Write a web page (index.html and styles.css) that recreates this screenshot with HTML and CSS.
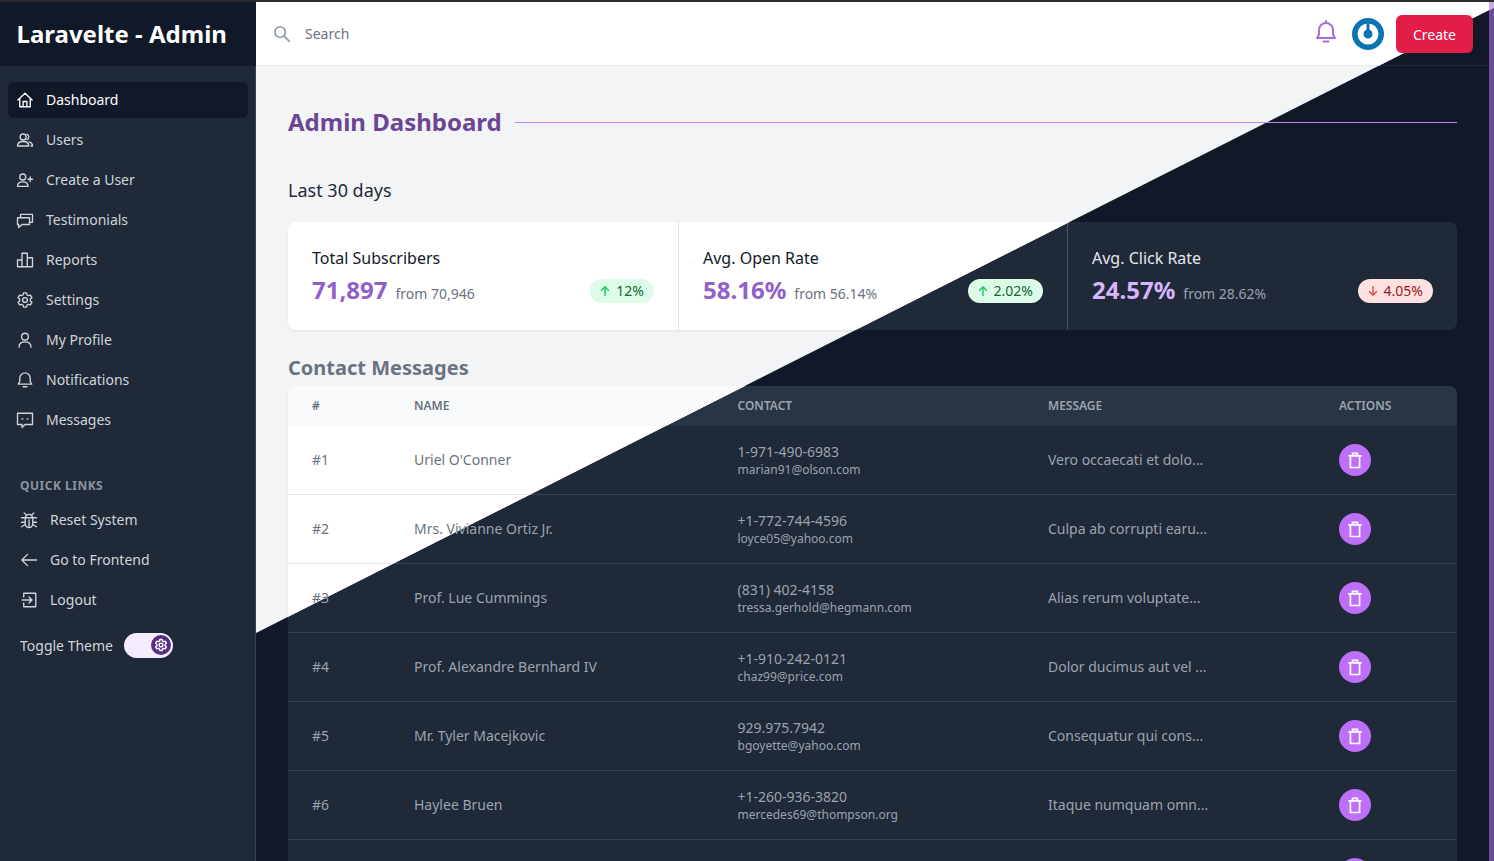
FILE: index.html
```html
<!DOCTYPE html>
<html lang="en">
<head>
<meta charset="utf-8">
<title>Laravelte - Admin</title>
<link rel="stylesheet" href="styles.css">
</head>
<body>
<svg class="defs" width="0" height="0" aria-hidden="true">
  <defs>
    <symbol id="i-trash" viewBox="0 0 24 24"><path d="M4 7h16M9 7V4h6v3M6.500 7v14h11V7" fill="none" stroke="currentColor" stroke-width="2"/></symbol>
    <symbol id="i-up" viewBox="0 0 20 20"><path d="M10 17V4M4.500 9.500 10 4l5.500 5.500" fill="none" stroke="currentColor" stroke-width="2"/></symbol>
    <symbol id="i-down" viewBox="0 0 20 20"><path d="M10 3v13M4.500 10.500 10 16l5.500-5.500" fill="none" stroke="currentColor" stroke-width="2"/></symbol>
    <symbol id="i-bell" viewBox="0 0 24 24"><path d="M12 1v2M12 3a7 7 0 0 0-7 7v4.500L3 18h18l-2-3.500V10a7 7 0 0 0-7-7ZM9.500 21.500h5" fill="none" stroke="currentColor" stroke-width="2" stroke-linejoin="round" stroke-linecap="round"/></symbol>
    <symbol id="i-search" viewBox="0 0 24 24"><circle cx="9.500" cy="9.500" r="7" fill="none" stroke="currentColor" stroke-width="2.600"/><path d="m14.500 14.500 8 8" stroke="currentColor" stroke-width="2.800" fill="none"/></symbol>
    <symbol id="i-avatar" viewBox="0 0 32 32"><circle cx="16" cy="16" r="16" fill="#0b75b4"/><circle cx="16" cy="16" r="7.500" fill="none" stroke="#fff" stroke-width="6"/><path d="M16 15V4.500" stroke="#0b75b4" stroke-width="3"/></symbol>
  </defs>
</svg>
<div class="app">
  <aside class="sidebar">
    <div class="brand">Laravelte - Admin</div>
    <nav class="nav">
      <a class="nav-item active"><svg class="nav-icon" viewBox="0 0 24 24"><path d="M2.500 12 12 3l9.500 9M5 10v11h14V10M9.500 21v-7h5v7"/></svg>Dashboard</a>
      <a class="nav-item"><svg class="nav-icon" viewBox="0 0 24 24"><circle cx="9.500" cy="8" r="4"/><path d="M2 20c0-4 3.500-6 7.500-6s7.500 2 7.500 6ZM14.500 4.300a4 4 0 0 1 0 7.400M17.500 14.500c2.600.8 4.500 2.700 4.500 5.500h-2"/></svg>Users</a>
      <a class="nav-item"><svg class="nav-icon" viewBox="0 0 24 24"><circle cx="9" cy="8" r="4"/><path d="M2 20.500c0-4 3-6 7-6s7 2 7 6ZM19 8v6M16 11h6"/></svg>Create a User</a>
      <a class="nav-item"><svg class="nav-icon" viewBox="0 0 24 24"><path d="M2 9h16v9H8l-4.500 4v-4H2ZM6 9V4.500h16V15h-4"/></svg>Testimonials</a>
      <a class="nav-item"><svg class="nav-icon" viewBox="0 0 24 24"><path d="M2 21h20M2 21v-9h6v9M8 21V3h7v18M15 21V9h7v12"/></svg>Reports</a>
      <a class="nav-item"><svg class="nav-icon" viewBox="0 0 24 24"><path d="M10 2.500h4l.6 2.800 1.900 1 2.700-.9 2 3.500-2.100 1.900v2.400l2.100 1.900-2 3.500-2.700-.9-1.900 1-.6 2.800h-4l-.6-2.800-1.900-1-2.700.9-2-3.500 2.100-1.900V10.800L2.800 8.900l2-3.500 2.700.9 1.900-1Z"/><circle cx="12" cy="12" r="3.200"/></svg>Settings</a>
      <a class="nav-item"><svg class="nav-icon" viewBox="0 0 24 24"><circle cx="12" cy="7.500" r="4.500"/><path d="M4 21.500c0-5 3.500-7 8-7s8 2 8 7"/></svg>My Profile</a>
      <a class="nav-item"><svg class="nav-icon" viewBox="0 0 24 24"><path d="M12 2.500a7 7 0 0 0-7 7v4.500l-2 3.500h18L19 14V9.500a7 7 0 0 0-7-7ZM9.500 21h5"/></svg>Notifications</a>
      <a class="nav-item"><svg class="nav-icon" viewBox="0 0 24 24"><path d="M2 3h20v15H12l-4 4v-4H2ZM8 10.500h1.200M14.800 10.500H16"/></svg>Messages</a>
    </nav>
    <div class="quick-title">QUICK LINKS</div>
    <nav class="nav quick">
      <a class="nav-item"><svg class="nav-icon" viewBox="0 0 24 24"><path d="M7 9h10v8a5 5 0 0 1-10 0ZM12 12v10M7.500 9a4.500 4.500 0 0 1 9 0M8 5 5.500 2.500M16 5l2.500-2.500M2 9h5M22 9h-5M2 15h5M22 15h-5M2 21l5-3M22 21l-5-3"/></svg>Reset System</a>
      <a class="nav-item"><svg class="nav-icon" viewBox="0 0 24 24"><path d="M22 12H2.500M10 4.500 2.500 12l7.500 7.500"/></svg>Go to Frontend</a>
      <a class="nav-item"><svg class="nav-icon" viewBox="0 0 24 24"><path d="M5 8V3h16v18H5v-5M3 12h13M12 8l4 4-4 4"/></svg>Logout</a>
    </nav>
    <div class="theme-row">
      <span>Toggle Theme</span>
      <span class="switch"><span class="knob"><svg class="knob-icon" viewBox="0 0 24 24"><path d="M10 2.500h4l.6 2.800 1.900 1 2.700-.9 2 3.500-2.100 1.900v2.400l2.100 1.900-2 3.500-2.700-.9-1.900 1-.6 2.800h-4l-.6-2.800-1.900-1-2.700.9-2-3.500 2.100-1.900V10.800L2.800 8.900l2-3.500 2.700.9 1.900-1Z"/><circle cx="12" cy="12" r="3.200"/></svg></span></span>
    </div>
  </aside>

  <div class="stage">
    <main class="view dark" aria-hidden="true">
      <header class="topbar">
        <div class="search"><svg class="search-icon"><use href="#i-search"/></svg><span>Search</span></div>
        <svg class="bell"><use href="#i-bell"/></svg>
        <svg class="avatar"><use href="#i-avatar"/></svg>
      </header>
      <div class="content">
        <div class="title-row"><h1>Admin Dashboard</h1><span class="rule"></span></div>
        <h3 class="period">Last 30 days</h3>
        <section class="stats">
          <div class="stat"><div class="stat-name">Total Subscribers</div><div class="stat-line"><b class="stat-value">71,897</b><span class="stat-from">from 70,946</span><span class="badge up"><svg><use href="#i-up"/></svg>12%</span></div></div>
          <div class="stat"><div class="stat-name">Avg. Open Rate</div><div class="stat-line"><b class="stat-value">58.16%</b><span class="stat-from">from 56.14%</span><span class="badge up"><svg><use href="#i-up"/></svg>2.02%</span></div></div>
          <div class="stat"><div class="stat-name">Avg. Click Rate</div><div class="stat-line"><b class="stat-value">24.57%</b><span class="stat-from">from 28.62%</span><span class="badge down"><svg><use href="#i-down"/></svg>4.05%</span></div></div>
        </section>
        <h2 class="section-title">Contact Messages</h2>
        <div class="table">
          <div class="row head"><span>#</span><span>Name</span><span>Contact</span><span>Message</span><span>Actions</span></div>
          <div class="row"><span>#1</span><span>Uriel O'Conner</span><span class="contact"><span>1-971-490-6983</span><small>marian91@olson.com</small></span><span>Vero occaecati et dolo...</span><a class="del"><svg><use href="#i-trash"/></svg></a></div>
          <div class="row"><span>#2</span><span>Mrs. Vivianne Ortiz Jr.</span><span class="contact"><span>+1-772-744-4596</span><small>loyce05@yahoo.com</small></span><span>Culpa ab corrupti earu...</span><a class="del"><svg><use href="#i-trash"/></svg></a></div>
          <div class="row"><span>#3</span><span>Prof. Lue Cummings</span><span class="contact"><span>(831) 402-4158</span><small>tressa.gerhold@hegmann.com</small></span><span>Alias rerum voluptate...</span><a class="del"><svg><use href="#i-trash"/></svg></a></div>
          <div class="row"><span>#4</span><span>Prof. Alexandre Bernhard IV</span><span class="contact"><span>+1-910-242-0121</span><small>chaz99@price.com</small></span><span>Dolor ducimus aut vel ...</span><a class="del"><svg><use href="#i-trash"/></svg></a></div>
          <div class="row"><span>#5</span><span>Mr. Tyler Macejkovic</span><span class="contact"><span>929.975.7942</span><small>bgoyette@yahoo.com</small></span><span>Consequatur qui cons...</span><a class="del"><svg><use href="#i-trash"/></svg></a></div>
          <div class="row"><span>#6</span><span>Haylee Bruen</span><span class="contact"><span>+1-260-936-3820</span><small>mercedes69@thompson.org</small></span><span>Itaque numquam omn...</span><a class="del"><svg><use href="#i-trash"/></svg></a></div>
          <div class="row"><span></span><span></span><span></span><span></span><a class="del"><svg><use href="#i-trash"/></svg></a></div>
        </div>
      </div>
      <div class="scrollbar"></div>
    </main>

    <main class="view light">
      <header class="topbar">
        <div class="search"><svg class="search-icon"><use href="#i-search"/></svg><span>Search</span></div>
        <svg class="bell"><use href="#i-bell"/></svg>
        <svg class="avatar"><use href="#i-avatar"/></svg>
      </header>
      <div class="content">
        <div class="title-row"><h1>Admin Dashboard</h1><span class="rule"></span></div>
        <h3 class="period">Last 30 days</h3>
        <section class="stats">
          <div class="stat"><div class="stat-name">Total Subscribers</div><div class="stat-line"><b class="stat-value">71,897</b><span class="stat-from">from 70,946</span><span class="badge up"><svg><use href="#i-up"/></svg>12%</span></div></div>
          <div class="stat"><div class="stat-name">Avg. Open Rate</div><div class="stat-line"><b class="stat-value">58.16%</b><span class="stat-from">from 56.14%</span><span class="badge up"><svg><use href="#i-up"/></svg>2.02%</span></div></div>
          <div class="stat"><div class="stat-name">Avg. Click Rate</div><div class="stat-line"><b class="stat-value">24.57%</b><span class="stat-from">from 28.62%</span><span class="badge down"><svg><use href="#i-down"/></svg>4.05%</span></div></div>
        </section>
        <h2 class="section-title">Contact Messages</h2>
        <div class="table">
          <div class="row head"><span>#</span><span>Name</span><span>Contact</span><span>Message</span><span>Actions</span></div>
          <div class="row"><span>#1</span><span>Uriel O'Conner</span><span class="contact"><span>1-971-490-6983</span><small>marian91@olson.com</small></span><span>Vero occaecati et dolo...</span><a class="del"><svg><use href="#i-trash"/></svg></a></div>
          <div class="row"><span>#2</span><span>Mrs. Vivianne Ortiz Jr.</span><span class="contact"><span>+1-772-744-4596</span><small>loyce05@yahoo.com</small></span><span>Culpa ab corrupti earu...</span><a class="del"><svg><use href="#i-trash"/></svg></a></div>
          <div class="row"><span>#3</span><span>Prof. Lue Cummings</span><span class="contact"><span>(831) 402-4158</span><small>tressa.gerhold@hegmann.com</small></span><span>Alias rerum voluptate...</span><a class="del"><svg><use href="#i-trash"/></svg></a></div>
        </div>
      </div>
      <div class="scrollbar"></div>
    </main>
    <a class="create">Create</a>
  </div>
</div>
</body>
</html>
```
FILE: styles.css
```css
* { box-sizing: border-box; }
html, body { margin: 0; height: 100%; overflow: hidden; }
body { font-family: "Noto Sans", sans-serif; font-size: 14px; color: #111827; background: #111827; }
.defs { position: absolute; }
.app { height: 861px; display: flex; border-top: 2px solid #2b2b2b; overflow: hidden; }

.sidebar { width: 256px; flex: none; background: #1f2937; border-right: 1px solid #374151; color: #d1d5db; display: flex; flex-direction: column; }
.brand { height: 64px; background: #111827; color: #fff; font-size: 24px; font-weight: 700; line-height: 64px; padding-left: 16.500px; margin-right: -1px; }
.nav { display: flex; flex-direction: column; gap: 4px; padding: 16px 7px 0 8px; }
.nav-item { height: 36px; display: flex; align-items: center; gap: 12px; padding: 0 8px; border-radius: 6px; color: #d1d5db; line-height: 20px; }
.nav-item.active { background: #111827; color: #fff; }
.nav-icon { width: 18px; height: 18px; flex: none; fill: none; stroke: currentColor; stroke-width: 1.800; stroke-linejoin: round; stroke-linecap: round; }
.quick-title { margin: 40px 0 0 20px; font-size: 12px; line-height: 16px; font-weight: 700; letter-spacing: .5px; color: #8a93a1; }
.nav.quick { padding: 8px 7px 0 12px; }
.theme-row { margin: 13px 0 0 20px; height: 28px; display: flex; align-items: center; gap: 11.500px; color: #d1d5db; }
.switch { width: 49px; height: 25px; border-radius: 13px; background: #f5ecfd; display: flex; justify-content: flex-end; align-items: center; padding-right: 2px; }
.knob { width: 20px; height: 20px; border-radius: 50%; background: #552e82; display: grid; place-items: center; }
.knob-icon { width: 14px; height: 14px; fill: none; stroke: #fff; stroke-width: 2.400; stroke-linejoin: round; }

.stage { flex: 1; position: relative; min-width: 0; }
.view { height: 859px; overflow: hidden; position: relative; }
.view.light { position: absolute; inset: 0; clip-path: polygon(0 0, 1238px 0, 1238px 5.500px, 0 631px); }
.dark { background: #111827; --line: #1f2937; --card: #1f2937; --head: #2a3544; --divider: #4b5563; --rowline: #374151; --top: #111827; --t1: #e5e7eb; --t2: #9ca3af; --t3: #9ca3af; --period: #e5e7eb; --h1: #d8b4fe; --value: #d8b4fe; --section: #d1d5db; --search: #9ca3af; --shadow: none; --thumb: #6d4a9c; }
.light { background: #f3f4f6; --line: #e5e7eb; --card: #fff; --head: #f9fafb; --divider: #e5e7eb; --rowline: #e5e7eb; --top: #fff; --t1: #111827; --t2: #6b7280; --t3: #6b7280; --period: #1f2937; --h1: #6b4694; --value: #9061c7; --section: #6b7280; --search: #6b7280; --shadow: 0 1px 2px rgba(0,0,0,.08); --thumb: #c9a9e8; }

.topbar { height: 64px; background: var(--top); border-bottom: 1px solid var(--line); display: flex; align-items: center; padding: 0 110px 0 17px; }
.search { flex: 1; display: flex; align-items: center; gap: 14px; color: var(--search); }
.search-icon { width: 18px; height: 18px; color: #9ca3af; }
.bell { width: 24px; height: 24px; color: #a56fd6; margin-right: 14px; margin-top: -4px; }
.avatar { width: 32px; height: 32px; }
.create { position: absolute; top: 13px; right: 21px; width: 77px; height: 38px; background: #e11d48; color: #fff; border-radius: 6px; display: grid; place-items: center; }

.content { padding: 40px 37px 0 32px; }
.title-row { display: flex; align-items: center; gap: 13px; height: 32px; }
h1 { margin: 0; font-size: 24px; line-height: 32px; font-weight: 700; color: var(--h1); white-space: nowrap; }
.rule { flex: 1; height: 1px; background: #c084fc; }
.period { margin: 38px 0 0; height: 28px; font-size: 18px; line-height: 28px; font-weight: 400; color: var(--period); }
.stats { margin-top: 18px; display: grid; grid-template-columns: 390px 389px 1fr; height: 108px; background: var(--card); border-radius: 8px; box-shadow: var(--shadow); }
.stat { padding: 24px; border-left: 1px solid var(--divider); }
.stat:first-child { border-left: 0; }
.stat-name { font-size: 16px; line-height: 24px; color: var(--t1); }
.stat-line { display: flex; align-items: baseline; margin-top: 4px; }
.stat-value { font-size: 24px; line-height: 32px; font-weight: 700; color: var(--value); }
.stat-from { margin-left: 8px; line-height: 20px; color: var(--t2); }
.badge { margin: 2px 0 0 auto; height: 24px; padding: 0 10px 0 8px; border-radius: 12px; display: flex; align-items: center; gap: 4px; line-height: 20px; align-self: center; }
.badge svg { width: 14px; height: 14px; }
.badge.up { background: #dcfce7; color: #166534; }
.badge.up svg { color: #22c55e; }
.badge.down { background: #fee2e2; color: #991b1b; }
.badge.down svg { color: #ef4444; }
.section-title { margin: 24px 0 0; height: 32px; font-size: 20px; line-height: 28px; font-weight: 700; color: var(--section); }

.table { background: var(--card); border-radius: 8px 8px 0 0; box-shadow: var(--shadow); color: var(--t3); }
.row { display: grid; grid-template-columns: 102px 323.500px 310.500px 291px 1fr; align-items: center; height: 69px; padding-left: 24px; border-top: 1px solid var(--rowline); line-height: 20px; }
.row:nth-child(2) { height: 68px; border-top: 0; }
.row.head { height: 40px; background: var(--head); border-top: 0; border-radius: 8px 8px 0 0; font-size: 12px; font-weight: 600; text-transform: uppercase; line-height: 16px; }
.contact { display: flex; flex-direction: column; }
.contact small { font-size: 12px; line-height: 16px; }
.del { width: 32px; height: 32px; border-radius: 50%; background: #bd6ff8; color: #fff; display: grid; place-items: center; }
.del svg { width: 20px; height: 20px; }
.scrollbar { position: absolute; top: 0; right: 0; width: 5px; height: 100%; background: var(--thumb); }
```
